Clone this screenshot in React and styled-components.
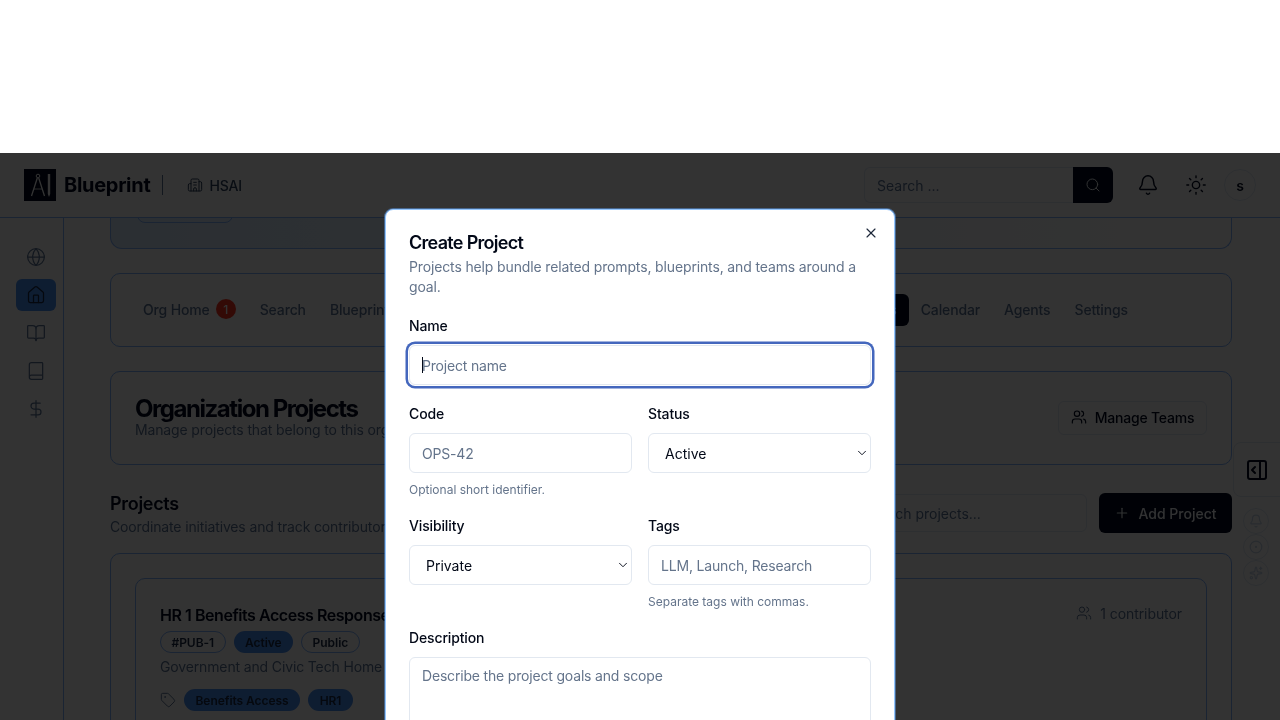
import styled, { createGlobalStyle } from "styled-components";
import {
  Bell,
  Book,
  BookOpen,
  Building2,
  ChevronDown,
  CircleDot,
  DollarSign,
  Globe,
  House,
  PanelRightOpen,
  Plus,
  Search,
  Sparkles,
  Sun,
  Tag,
  Users,
  X,
} from "lucide-react";

const GlobalStyle = createGlobalStyle`
  html, body {
    margin: 0;
    height: 720px;
    overflow: hidden;
    background: #fff;
    font-family: Inter, "Liberation Sans", sans-serif;
    letter-spacing: -0.14px;
    color: #020817;
  }
  * { box-sizing: border-box; }
`;

const TopGap = styled.div`
  height: 153px;
  background: #fff;
`;

const Frame = styled.div`
  position: relative;
  height: 567px;
  overflow: hidden;
  background: #fff;
  display: flex;
  flex-direction: column;
`;

const Backdrop = styled.div`
  position: absolute;
  inset: 0;
  background: rgba(0, 0, 0, 0.8);
  backdrop-filter: blur(0.6px) saturate(1.5);
`;

const Header = styled.header`
  height: 65px;
  flex: none;
  display: flex;
  align-items: center;
  justify-content: space-between;
  padding: 0 24px;
  border-bottom: 1px solid #8fb0e6;
`;

const Brand = styled.div`
  display: flex;
  align-items: center;
`;

const BrandName = styled.span`
  margin-left: 8px;
  font-size: 20px;
  font-weight: 700;
  letter-spacing: -0.3px;
`;

const Divider = styled.span`
  width: 1px;
  height: 20px;
  margin: 0 24px 0 12px;
  background: #64748b;
`;

const OrgName = styled.span`
  display: flex;
  align-items: center;
  gap: 6px;
  font-size: 14px;
  font-weight: 500;
  color: #334155;
`;

const HeaderActions = styled.div`
  display: flex;
  align-items: center;
  gap: 8px;
`;

const SearchBox = styled.div`
  display: flex;
  width: 249px;
  height: 36px;
  margin-right: 7px;
`;

const SearchInput = styled.input`
  flex: 1;
  min-width: 0;
  padding: 0 12px;
  border: 1px solid #e2e8f0;
  border-right: 0;
  border-radius: 6px 0 0 6px;
  background: #fff;
  font: 14px Inter, sans-serif;
  &::placeholder { color: #64748b; }
`;

const SearchButton = styled.button`
  width: 40px;
  display: flex;
  align-items: center;
  justify-content: center;
  border: 0;
  border-radius: 0 6px 6px 0;
  background: #020817;
  color: #f8fafc;
`;

const IconButton = styled.button`
  width: 40px;
  height: 40px;
  display: flex;
  align-items: center;
  justify-content: center;
  padding: 0;
  border: 0;
  background: none;
  color: #020817;
`;

const Avatar = styled.div`
  width: 32px;
  height: 32px;
  display: flex;
  align-items: center;
  justify-content: center;
  border: 1px solid #e2e8f0;
  border-radius: 50%;
  font-size: 14px;
  font-weight: 600;
`;

const Body = styled.div`
  flex: 1;
  min-height: 0;
  display: flex;
`;

const Sidebar = styled.nav`
  width: 64px;
  flex: none;
  display: flex;
  flex-direction: column;
  gap: 6px;
  padding: 23px 0 0 16px;
  border-right: 1px solid #8fb0e6;
`;

const SideItem = styled.div`
  width: 40px;
  height: 32px;
  display: flex;
  align-items: center;
  justify-content: center;
  border-radius: 6px;
  background: ${(p) => (p.$active ? "#5c8cd0" : "transparent")};
  color: ${(p) => (p.$active ? "#1e293b" : "#64748b")};
`;

const Content = styled.main`
  flex: 1;
  min-width: 0;
  overflow: hidden;
  display: flex;
  flex-direction: column;
  padding: 0 48px 0 46px;
`;

const Banner = styled.section`
  height: 31px;
  flex: none;
  padding-left: 26px;
  border: 1px solid #8fb0e6;
  border-top: 0;
  border-radius: 0 0 12px 12px;
  background: linear-gradient(90deg, #dbe8fb, #f3f7fd 60%, #fff);
`;

const BannerChip = styled.div`
  width: 96px;
  height: 34px;
  margin-top: -29px;
  display: flex;
  align-items: center;
  justify-content: center;
  border: 1px solid #8fb0e6;
  border-radius: 8px;
  color: #334155;
`;

const Card = styled.section`
  flex: none;
  border: 1px solid #8fb0e6;
  border-radius: 10px;
`;

const TabsCard = styled(Card)`
  height: 74px;
  margin-top: 24px;
  display: flex;
  align-items: center;
  padding: 0 20px;
`;

const TabItem = styled.div`
  height: 32px;
  display: flex;
  align-items: center;
  gap: 6px;
  padding: 0 12px 2px;
  border-radius: 6px;
  font-size: 14px;
  font-weight: 500;
  white-space: nowrap;
  margin-left: ${(p) => p.$offset || 0}px;
  background: ${(p) => (p.$active ? "#020817" : "transparent")};
  color: ${(p) => (p.$active ? "#f8fafc" : "#64748b")};
`;

const CountBadge = styled.span`
  width: 20px;
  height: 20px;
  display: flex;
  align-items: center;
  justify-content: center;
  border-radius: 50%;
  background: #f04438;
  color: #fff;
  font-size: 12px;
`;

const OrgCard = styled(Card)`
  height: 94px;
  margin-top: 24px;
  display: flex;
  align-items: center;
  justify-content: space-between;
  padding: 0 24px;
`;

const OrgTitle = styled.h1`
  margin: 0 0 -2px;
  font-size: 24px;
  line-height: 26px;
  font-weight: 700;
  letter-spacing: -1.45px;
`;

const Muted = styled.p`
  margin: 0;
  font-size: 14px;
  line-height: 20px;
  color: #64748b;
`;

const OutlineButton = styled.button`
  height: 34px;
  width: 149px;
  display: flex;
  align-items: center;
  justify-content: center;
  gap: 8px;
  padding: 0 0 2px;
  border: 1px solid #e2e8f0;
  border-radius: 6px;
  background: #fff;
  color: #020817;
  font: 500 14px Inter, sans-serif;
  letter-spacing: -0.2px;
`;

const SectionRow = styled.div`
  flex: none;
  margin-top: 24px;
  display: flex;
  align-items: center;
  justify-content: space-between;
`;

const SectionTitle = styled.h2`
  margin: 0 0 -2px;
  font-size: 18px;
  line-height: 30px;
  font-weight: 600;
  letter-spacing: -0.3px;
`;

const SectionActions = styled.div`
  display: flex;
  align-items: center;
  gap: 12px;
`;

const ProjectSearch = styled.input`
  width: 240px;
  height: 38px;
  padding: 0 12px 0 17px;
  border: 1px solid #e2e8f0;
  border-radius: 6px;
  background: #fff;
  font: 14px Inter, sans-serif;
  &::placeholder { color: #64748b; }
`;

const PrimaryButton = styled.button`
  width: 133px;
  height: 40px;
  display: flex;
  align-items: center;
  justify-content: center;
  gap: 8px;
  border: 0;
  border-radius: 6px;
  background: #020817;
  color: #f8fafc;
  font: 500 14px Inter, sans-serif;
`;

const ListCard = styled(Card)`
  margin-top: 16px;
  padding: 24px 24px 0;
`;

const ProjectCard = styled.article`
  display: flex;
  justify-content: space-between;
  padding: 24px;
  height: 300px;
  border: 1px solid #8fb0e6;
  border-radius: 10px;
`;

const ProjectTitle = styled.h3`
  margin: 0 0 4px;
  font-size: 16px;
  line-height: 24px;
  font-weight: 600;
  letter-spacing: -0.45px;
`;

const PillRow = styled.div`
  display: flex;
  align-items: center;
  gap: 8px;
`;

const Pill = styled.span`
  height: 22px;
  display: flex;
  align-items: center;
  padding: 0 10.5px;
  border-radius: 11px;
  font-size: 12px;
  font-weight: 600;
  letter-spacing: -0.05px;
  border: 1px solid ${(p) => (p.$filled ? "transparent" : "#8fb0e6")};
  background: ${(p) => (p.$filled ? "#5c8cd0" : "transparent")};
  color: #1e293b;
`;

const ProjectText = styled(Muted)`
  margin: 4px 0 12px;
`;

const TagIcon = styled(Tag)`
  color: #64748b;
`;

const Contributors = styled.div`
  height: 20px;
  display: flex;
  align-items: center;
  gap: 8px;
  font-size: 14px;
  letter-spacing: -0.08px;
  color: #64748b;
`;

const RailTab = styled.div`
  position: absolute;
  left: 1233px;
  top: 289px;
  width: 60px;
  height: 55px;
  display: flex;
  align-items: center;
  padding-left: 11px;
  border: 1px solid #e2e8f0;
  border-radius: 8px 0 0 8px;
  background: #fff;
`;

const RailStack = styled.div`
  position: absolute;
  left: 1243px;
  top: 355px;
  display: flex;
  flex-direction: column;
`;

const RailDot = styled.div`
  width: 26px;
  height: 26px;
  display: flex;
  align-items: center;
  justify-content: center;
  border: 1px solid #e2e8f0;
  border-radius: 50%;
  color: #cbd5e1;
`;

const Modal = styled.div`
  position: absolute;
  left: 385px;
  top: 56px;
  width: 510px;
  padding: 24px 23px;
  border: 1px solid #93c5fd;
  border-radius: 8px;
  box-shadow: 0 0 0 1px rgba(96, 165, 250, 0.45);
  background: #fff;
  display: flex;
  flex-direction: column;
  gap: 22px;
`;

const CloseButton = styled.button`
  position: absolute;
  top: 15px;
  right: 15px;
  width: 16px;
  height: 16px;
  padding: 0;
  display: flex;
  border: 0;
  background: none;
  color: #1e293b;
`;

const ModalTitle = styled.h2`
  margin: 0 0 5px;
  font-size: 18px;
  line-height: 18px;
  font-weight: 600;
  letter-spacing: -0.7px;
`;

const Field = styled.div`
  display: flex;
  flex-direction: column;
`;

const FieldLabel = styled.label`
  margin-bottom: 12px;
  font-size: 14px;
  line-height: 14px;
  font-weight: 500;
`;

const ControlWrap = styled.div`
  position: relative;
`;

const TextInput = styled.input`
  width: 100%;
  height: 40px;
  padding: 0 12px;
  border: 1px solid #e2e8f0;
  border-radius: 6px;
  background: #fff;
  color: #020817;
  font: 14px Inter, sans-serif;
  letter-spacing: -0.18px;
  outline: none;
  &::placeholder { color: #64748b; }
  &:focus { box-shadow: 0 0 0 1px #fff, 0 0 0 3.5px #4467bd; }
`;

const Caret = styled.span`
  position: absolute;
  left: 13px;
  top: 12px;
  width: 1px;
  height: 16px;
  background: #020817;
`;

const TwoColumns = styled.div`
  display: grid;
  grid-template-columns: 1fr 1fr;
  gap: 16px;
`;

const SelectInput = styled.select`
  width: 100%;
  height: 40px;
  padding: 0 24px 0 16px;
  border: 1px solid #e2e8f0;
  border-radius: 6px;
  background: #fff;
  color: #020817;
  appearance: none;
  font: 14px Inter, sans-serif;
`;

const SelectArrow = styled(ChevronDown)`
  position: absolute;
  right: 2px;
  top: 13px;
  pointer-events: none;
`;

const TextArea = styled.textarea`
  width: 100%;
  height: 96px;
  padding: 8px 12px;
  border: 1px solid #e2e8f0;
  border-radius: 6px;
  background: #fff;
  resize: none;
  font: 14px/20px Inter, sans-serif;
  letter-spacing: -0.18px;
  &::placeholder { color: #64748b; }
`;

const Help = styled.p`
  margin: 9px 0 -1px;
  font-size: 12px;
  line-height: 16px;
  letter-spacing: 0;
  color: #64748b;
`;

const sideItems = [
  { icon: Globe },
  { icon: House, active: true },
  { icon: BookOpen },
  { icon: Book },
  { icon: DollarSign },
];

function Logo() {
  return (
    <svg width="32" height="32" viewBox="0 0 32 32">
      <rect width="32" height="32" fill="#020817" />
      <circle cx="14" cy="7" r="1.8" fill="none" stroke="#fff" strokeWidth="1" />
      <path d="M13.3 9 7.5 27M14.7 9l5.8 18" stroke="#fff" strokeWidth="1.3" fill="none" />
      <path d="M10 20h8" stroke="#fff" strokeWidth="0.8" fill="none" />
      <path d="M25 5v20" stroke="#fff" strokeWidth="2.4" fill="none" />
      <path d="M23.8 25h2.4L25 28z" fill="#fff" />
    </svg>
  );
}

function Select({ value, options }) {
  return (
    <ControlWrap>
      <SelectInput defaultValue={value}>
        {options.map((o) => (
          <option key={o}>{o}</option>
        ))}
      </SelectInput>
      <SelectArrow size={14} strokeWidth={1.6} />
    </ControlWrap>
  );
}

export default function App() {
  return (
    <>
      <GlobalStyle />
      <TopGap />
      <Frame>
        <Header>
          <Brand>
            <Logo />
            <BrandName>Blueprint</BrandName>
            <Divider />
            <OrgName>
              <Building2 size={16} strokeWidth={1.5} />
              HSAI
            </OrgName>
          </Brand>
          <HeaderActions>
            <SearchBox>
              <SearchInput placeholder="Search ..." readOnly />
              <SearchButton>
                <Search size={16} strokeWidth={1.5} />
              </SearchButton>
            </SearchBox>
            <IconButton>
              <Bell size={22} strokeWidth={1.6} />
            </IconButton>
            <IconButton>
              <Sun size={22} strokeWidth={1.5} />
            </IconButton>
            <Avatar>s</Avatar>
          </HeaderActions>
        </Header>

        <Body>
          <Sidebar>
            {sideItems.map(({ icon: Icon, active }, i) => (
              <SideItem key={i} $active={active}>
                <Icon size={20} strokeWidth={1.5} />
              </SideItem>
            ))}
          </Sidebar>

          <Content>
            <Banner>
              <BannerChip>
                <Users size={14} />
              </BannerChip>
            </Banner>

            <TabsCard>
              <TabItem>
                Org Home <CountBadge>1</CountBadge>
              </TabItem>
              <TabItem>Search</TabItem>
              <TabItem>Blueprints</TabItem>
              <TabItem $active $offset={423}>
                Projects
              </TabItem>
              <TabItem>Calendar</TabItem>
              <TabItem>Agents</TabItem>
              <TabItem>Settings</TabItem>
            </TabsCard>

            <OrgCard>
              <div>
                <OrgTitle>Organization Projects</OrgTitle>
                <Muted>Manage projects that belong to this organization.</Muted>
              </div>
              <OutlineButton>
                <Users size={16} strokeWidth={1.75} />
                Manage Teams
              </OutlineButton>
            </OrgCard>

            <SectionRow>
              <div>
                <SectionTitle>Projects</SectionTitle>
                <Muted>Coordinate initiatives and track contributors.</Muted>
              </div>
              <SectionActions>
                <ProjectSearch placeholder="Search projects..." readOnly />
                <PrimaryButton>
                  <Plus size={16} strokeWidth={1.75} />
                  Add Project
                </PrimaryButton>
              </SectionActions>
            </SectionRow>

            <ListCard>
              <ProjectCard>
                <div>
                  <ProjectTitle>HR 1 Benefits Access Response</ProjectTitle>
                  <PillRow>
                    <Pill>#PUB-1</Pill>
                    <Pill $filled>Active</Pill>
                    <Pill>Public</Pill>
                  </PillRow>
                  <ProjectText>Government and Civic Tech Home</ProjectText>
                  <PillRow>
                    <TagIcon size={16} strokeWidth={1.5} />
                    <Pill $filled>Benefits Access</Pill>
                    <Pill $filled>HR1</Pill>
                  </PillRow>
                </div>
                <Contributors>
                  <Users size={16} strokeWidth={1.5} />1 contributor
                </Contributors>
              </ProjectCard>
            </ListCard>
          </Content>
        </Body>

        <RailTab>
          <PanelRightOpen size={24} strokeWidth={2} />
        </RailTab>
        <RailStack>
          <RailDot>
            <Bell size={14} />
          </RailDot>
          <RailDot>
            <CircleDot size={14} />
          </RailDot>
          <RailDot>
            <Sparkles size={14} />
          </RailDot>
        </RailStack>

        <Backdrop />

        <Modal>
          <CloseButton>
            <X size={16} strokeWidth={1.75} />
          </CloseButton>
          <div>
            <ModalTitle>Create Project</ModalTitle>
            <Muted>Projects help bundle related prompts, blueprints, and teams around a goal.</Muted>
          </div>
          <Field>
            <FieldLabel>Name</FieldLabel>
            <ControlWrap>
              <TextInput placeholder="Project name" autoFocus />
              <Caret />
            </ControlWrap>
          </Field>
          <TwoColumns>
            <Field>
              <FieldLabel>Code</FieldLabel>
              <TextInput placeholder="OPS-42" />
              <Help>Optional short identifier.</Help>
            </Field>
            <Field>
              <FieldLabel>Status</FieldLabel>
              <Select value="Active" options={["Active", "Paused"]} />
            </Field>
          </TwoColumns>
          <TwoColumns>
            <Field>
              <FieldLabel>Visibility</FieldLabel>
              <Select value="Private" options={["Private", "Public"]} />
            </Field>
            <Field>
              <FieldLabel>Tags</FieldLabel>
              <TextInput placeholder="LLM, Launch, Research" />
              <Help>Separate tags with commas.</Help>
            </Field>
          </TwoColumns>
          <Field>
            <FieldLabel>Description</FieldLabel>
            <TextArea placeholder="Describe the project goals and scope" />
          </Field>
        </Modal>
      </Frame>
    </>
  );
}
